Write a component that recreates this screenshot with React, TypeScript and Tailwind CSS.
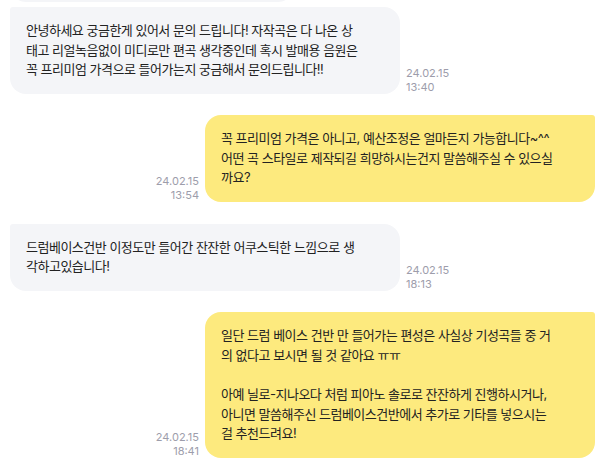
import React from 'react';

type Message = {
  from: 'me' | 'them';
  lines: string[];
  date: string;
  time: string;
};

const messages: Message[] = [
  {
    from: 'them',
    lines: [
      '안녕하세요 궁금한게 있어서 문의 드립니다! 자작곡은 다 나온 상',
      '태고 리얼녹음없이 미디로만 편곡 생각중인데 혹시 발매용 음원은',
      '꼭 프리미엄 가격으로 들어가는지 궁금해서 문의드립니다!!',
    ],
    date: '24.02.15',
    time: '13:40',
  },
  {
    from: 'me',
    lines: [
      '꼭 프리미엄 가격은 아니고, 예산조정은 얼마든지 가능합니다~^^',
      '어떤 곡 스타일로 제작되길 희망하시는건지 말씀해주실 수 있으실',
      '까요?',
    ],
    date: '24.02.15',
    time: '13:54',
  },
  {
    from: 'them',
    lines: [
      '드럼베이스건반 이정도만 들어간 잔잔한 어쿠스틱한 느낌으로 생',
      '각하고있습니다!',
    ],
    date: '24.02.15',
    time: '18:13',
  },
  {
    from: 'me',
    lines: [
      '일단 드럼 베이스 건반 만 들어가는 편성은 사실상 기성곡들 중 거',
      '의 없다고 보시면 될 것 같아요 ㅠㅠ',
      '',
      '아예 닐로-지나오다 처럼 피아노 솔로로 잔잔하게 진행하시거나,',
      '아니면 말씀해주신 드럼베이스건반에서 추가로 기타를 넣으시는',
      '걸 추천드려요!',
    ],
    date: '24.02.15',
    time: '18:41',
  },
];

const Stamp: React.FC<{ date: string; time: string; right?: boolean }> = ({ date, time, right }) => (
  <div className={`text-[11px] leading-[14px] text-[#9d9dab] shrink-0 ${right ? 'text-right' : 'text-left'}`}>
    <div>{date}</div>
    <div>{time}</div>
  </div>
);

const Bubble: React.FC<{ msg: Message }> = ({ msg }) => {
  const mine = msg.from === 'me';
  return (
    <div className={`flex items-end gap-1.5 ${mine ? 'justify-end' : 'justify-start'}`}>
      {mine && <Stamp date={msg.date} time={msg.time} right />}
      <div
        className={`w-[390px] px-4 py-[14px] rounded-2xl text-[13px] leading-[19.6px] tracking-[-0.5px] text-[#222222] ${
          mine ? 'bg-[#fdea7e] rounded-tr-[3px]' : 'bg-[#f4f5f8] rounded-tl-[3px]'
        }`}
      >
        {msg.lines.map((line, i) => (
          <div key={i} className="whitespace-nowrap h-[19.6px]">
            {line}
          </div>
        ))}
      </div>
      {!mine && <Stamp date={msg.date} time={msg.time} />}
    </div>
  );
};

export default function App() {
  return (
    <div
      className="w-[608px] h-[463px] overflow-hidden bg-white pl-[10px] pr-[13px]"
      style={{ fontFamily: 'Inter, "Noto Sans CJK KR", sans-serif' }}
    >
      <div className="flex flex-col">
        {/* previous message, mostly scrolled out */}
        <div className="-mt-[38.5px] h-[40px] w-[284px] rounded-2xl bg-[#f4f5f8]" />
        <div className="mt-[5.5px] flex flex-col gap-[21.5px]">
          {messages.map((m, i) => (
            <Bubble key={i} msg={m} />
          ))}
        </div>
      </div>
    </div>
  );
}
